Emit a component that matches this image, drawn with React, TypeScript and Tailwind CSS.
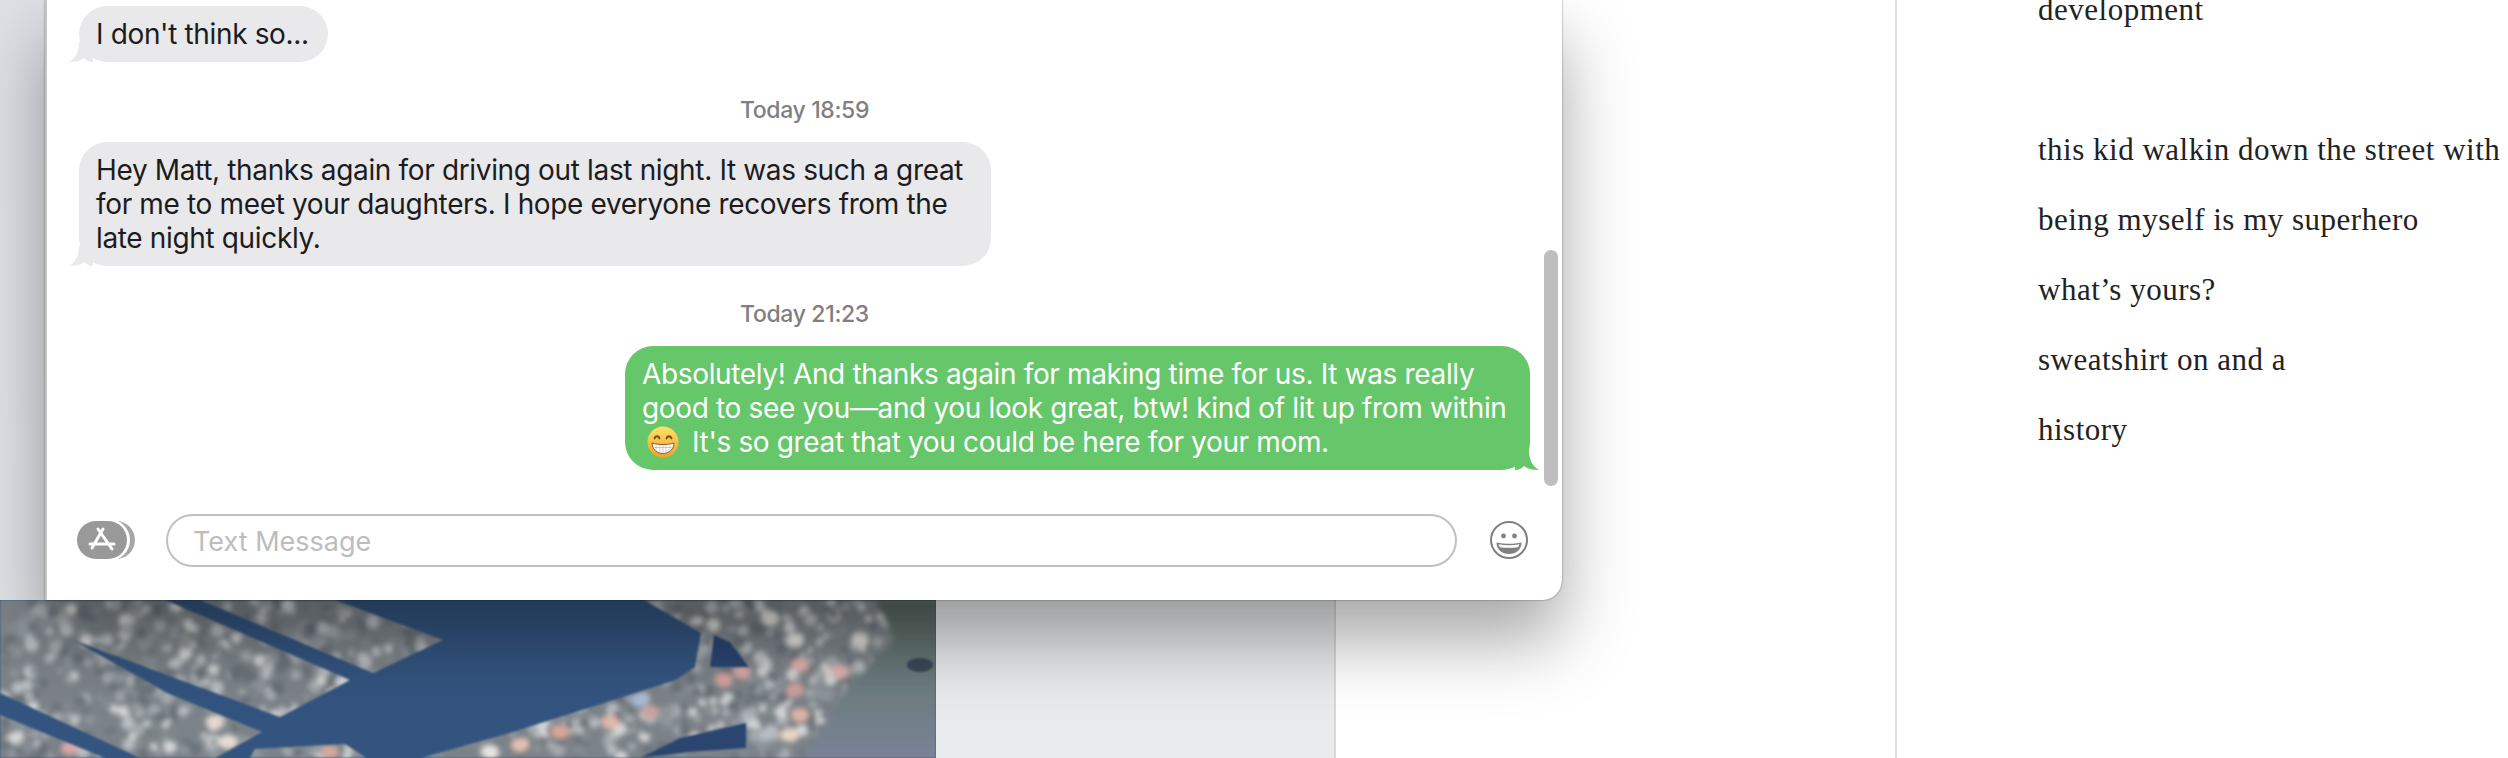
import React from 'react';

// Aerial photo behind the chat window, drawn roughly from land shapes + speckle
const LAND = [
  '200,600 335,600 443,640 373,673',
  '0,600 165,600 350,680 280,717 73,640 0,622',
  '0,622 73,640 167,693 262,732 215,758 140,758 0,693',
  '0,715 105,758 0,758',
  '255,749 345,744 366,758 250,758',
  '644,600 936,600 936,758 421,758 510,733 676,680 695,667 701,633',
];

const rng = (seed: number) => () => {
  seed = (seed * 16807) % 2147483647;
  return seed / 2147483647;
};

const makeBlobs = () => {
  const r = rng(4711);
  const palette = ['#b9bec2', '#8f969b', '#7b8288', '#a4aaae', '#6c737a', '#d4d6d6', '#858c91', '#687078'];
  const out: { x: number; y: number; s: number; c: string }[] = [];
  for (let i = 0; i < 1500; i++) {
    out.push({ x: r() * 900, y: 600 + r() * 158, s: 2.500 + r() * 4.500, c: palette[Math.floor(r() * palette.length)] });
  }
  return out;
};

const ROOFS = [
  [724, 680, '#d9a3a0'], [742, 672, '#d8a8a8'], [800, 665, '#e0b0ac'], [840, 672, '#dfb3ae'], [795, 690, '#cfa09c'],
  [640, 700, '#a9bcd6'], [650, 712, '#c9a5a2'], [610, 722, '#e0b8ac'], [560, 732, '#d8a696'], [520, 745, '#e5c0b0'],
  [490, 752, '#e9e4e0'], [800, 715, '#dfb3a5'], [790, 735, '#e7d6c8'], [330, 752, '#d8a8a0'], [215, 722, '#e6d8d0'],
  [228, 742, '#e8ddd5'], [770, 618, '#e4e2de'], [795, 640, '#e4e4e0'], [860, 640, '#dcdcd8'], [70, 748, '#d8a8a8'],
] as const;

const Photo = () => {
  const blobs = makeBlobs();
  return (
    <svg viewBox="0 600 936 158" className="w-full h-full block">
      <defs>
        <clipPath id="land">
          {LAND.map((p) => (
            <polygon key={p} points={p} />
          ))}
        </clipPath>
        <filter id="soft" x="-5%" y="-5%" width="110%" height="110%">
          <feGaussianBlur stdDeviation="2.600" />
        </filter>
        <filter id="edge" x="-5%" y="-5%" width="110%" height="110%">
          <feGaussianBlur stdDeviation="1.200" />
        </filter>
        <linearGradient id="field" x1="0" y1="0" x2="0" y2="1">
          <stop offset="0" stopColor="#59665f" />
          <stop offset="0.55" stopColor="#6c7d80" />
          <stop offset="1" stopColor="#7b8296" />
        </linearGradient>
      </defs>
      <rect x="0" y="600" width="936" height="158" fill="#33547f" />
      <g filter="url(#edge)">
        <g clipPath="url(#land)">
          <rect x="0" y="600" width="936" height="158" fill="#7c8388" />
          <g filter="url(#soft)">
            {blobs.map((b, i) => (
              <circle key={i} cx={b.x} cy={b.y} r={b.s} fill={b.c} />
            ))}
            {ROOFS.map(([x, y, c], i) => (
              <ellipse key={i} cx={x} cy={y} rx="9" ry="7" fill={c} />
            ))}
            <polygon points="875,600 940,600 940,760 800,760 850,685 895,640" fill="url(#field)" />
          </g>
        </g>
      </g>
      <g filter="url(#edge)">
        <polygon points="714,635 730,642 749,667 710,667" fill="#2a4470" />
        <polygon points="746,723 746,748 690,752 640,758 680,738" fill="#2a4470" />
        <ellipse cx="920" cy="665" rx="13" ry="7" fill="#3a4658" />
      </g>
    </svg>
  );
};

const AppsIcon = () => (
  <svg width="58" height="38" viewBox="0 0 58 38" className="shrink-0">
    <rect x="8" y="0" width="50" height="38" rx="19" fill="#a6a6a6" />
    <rect x="0" y="-2" width="53" height="42" rx="21" fill="#ffffff" />
    <rect x="0" y="0" width="50" height="38" rx="19" fill="#999999" />
    <g stroke="#ffffff" strokeWidth="3" strokeLinecap="round" fill="none">
      <path d="M26 8 L15 27" />
      <path d="M21 8 L35 28" />
      <path d="M13 23 H37" />
    </g>
  </svg>
);

const SmileIcon = () => (
  <svg width="38" height="38" viewBox="0 0 38 38" className="shrink-0">
    <circle cx="19" cy="19" r="18" fill="none" stroke="#808080" strokeWidth="2" />
    <circle cx="13.500" cy="15" r="2.400" fill="#808080" />
    <circle cx="24.500" cy="15" r="2.400" fill="#808080" />
    <path d="M6.500 21.500c8 1.800 17 1.800 25 0 0 7-5.500 11.500-12.500 11.500S6.500 28.500 6.500 21.500z" fill="#808080" />
    <path d="M8.500 23.300c7 1.200 14 1.200 21 0-.4 1.200-.8 2-1.400 2.900-6 .8-12.200.8-18.200 0-.6-.9-1.100-1.700-1.400-2.900z" fill="#ffffff" />
  </svg>
);

const GrinEmoji = () => (
  <svg width="32" height="32" viewBox="0 0 32 32" className="inline-block align-[-6px] ml-[5px] mr-[13px]">
    <defs>
      <linearGradient id="face" x1="0" y1="0" x2="0" y2="1">
        <stop offset="0" stopColor="#fde26a" />
        <stop offset="1" stopColor="#f0a028" />
      </linearGradient>
    </defs>
    <circle cx="16" cy="16" r="15.500" fill="url(#face)" />
    <path d="M7.500 12.500c.8-3 4.200-3 5 0M19.500 12.500c.8-3 4.200-3 5 0" fill="none" stroke="#7a4a14" strokeWidth="1.800" strokeLinecap="round" />
    <path d="M5 17c7 2 15 2 22 0 0 6-5 10.500-11 10.500S5 23 5 17z" fill="#ffffff" stroke="#8a5a20" strokeWidth="1" />
    <path d="M6 21.500h20M9 18.500v7M13 19v8M16 19v8.500M19 19v8M23 18.500v7" stroke="#b8b8b8" strokeWidth=".7" />
  </svg>
);

const Stamp = ({ children }: { children: React.ReactNode }) => (
  <div className="mt-[34px] mb-[18px] h-[28px] leading-[28px] text-center text-[23px] font-medium text-[#808080]">{children}</div>
);

const Incoming = ({ lines, className }: { lines: string[]; className: string }) => (
  <div className={`relative self-start ml-[32px] bg-[#e9e9eb] rounded-[28px] px-[17px] py-[11px] text-[#1c1c1e] ${className}`}>
    <svg width="24" height="20" viewBox="0 0 24 20" className="absolute left-[-10px] bottom-0">
      <path d="M10 0 C10 9 7 16 0 20 C6 20 11 19 15 16 C17 18 20 20 24 20 L24 0 Z" fill="#e9e9eb" />
    </svg>
    {lines.map((l) => (
      <div key={l} className="relative whitespace-nowrap">{l}</div>
    ))}
  </div>
);

const poem = ['this kid walkin down the street with', 'being myself is my superhero', 'what’s yours?', 'sweatshirt on and a', 'history'];

export default function App() {
  return (
    <div className="relative w-[2508px] h-[758px] overflow-hidden bg-white flex font-['Inter',sans-serif]">
      <div className="w-[936px] shrink-0 flex flex-col">
        <div className="h-[600px] bg-gradient-to-b from-[#dde1e6] to-[#e0e3e7]" />
        <div className="flex-1">
          <Photo />
        </div>
      </div>
      <div className="w-[400px] shrink-0 bg-[#e9eaec] border-r-2 border-[#d8d8d8]" />
      <div className="w-[559px] shrink-0" />
      <div className="flex-1 border-l-2 border-[#e0e0e0] pl-[141px] font-['Liberation_Serif',serif] text-[31px] tracking-[0.5px] text-[#222222] whitespace-nowrap">
        <div className="h-[20px] leading-[20px] mb-[95px]">development</div>
        {poem.map((l) => (
          <div key={l} className="h-[70px] leading-[70px]">{l}</div>
        ))}
      </div>

      {/* Messages window floating over the desktop */}
      <div className="absolute left-[45px] top-0 w-[1517px] h-[600px] bg-white border-l-2 border-[#c4c4c4] rounded-br-[20px] shadow-[0_40px_70px_rgba(0,0,0,0.35),0_0_2px_rgba(0,0,0,0.55)] flex flex-col text-[28px] leading-[34px] tracking-[-0.35px]">
        <div className="flex-1 flex flex-col pt-[6px]">
          <Incoming className="w-[249px]" lines={["I don't think so..."]} />
          <Stamp>Today 18:59</Stamp>
          <Incoming
            className="w-[912px]"
            lines={[
              'Hey Matt, thanks again for driving out last night. It was such a great',
              'for me to meet your daughters. I hope everyone recovers from the',
              'late night quickly.',
            ]}
          />
          <Stamp>Today 21:23</Stamp>
          <div className="relative self-end mr-[32px] w-[905px] bg-[#66c66a] rounded-[28px] px-[17px] py-[11px] text-white">
            <svg width="24" height="20" viewBox="0 0 24 20" className="absolute right-[-9px] bottom-0">
              <path d="M14 0 C14 9 17 16 24 20 C18 20 13 19 9 16 C7 18 4 20 0 20 L0 0 Z" fill="#66c66a" />
            </svg>
            <div className="relative whitespace-nowrap">Absolutely! And thanks again for making time for us. It was really</div>
            <div className="relative whitespace-nowrap">good to see you—and you look great, btw! kind of lit up from within</div>
            <div className="relative whitespace-nowrap">
              <GrinEmoji />
              It's so great that you could be here for your mom.
            </div>
          </div>
        </div>
        <div className="h-[86px] shrink-0 flex items-start pl-[30px] pr-[34px]">
          <div className="mt-[7px] mr-[31px]">
            <AppsIcon />
          </div>
          <div className="w-[1291px] h-[53px] mt-0 border-2 border-[#c0c0c0] rounded-full pl-[25px] pt-[2px] flex items-center text-[#bdbdbd] text-[27px] tracking-normal">
            Text Message
          </div>
          <div className="mt-[7px] ml-[33px]">
            <SmileIcon />
          </div>
        </div>
        <div className="absolute right-[4px] top-[250px] w-[14px] h-[236px] rounded-full bg-[#bebebe]" />
      </div>
    </div>
  );
}
